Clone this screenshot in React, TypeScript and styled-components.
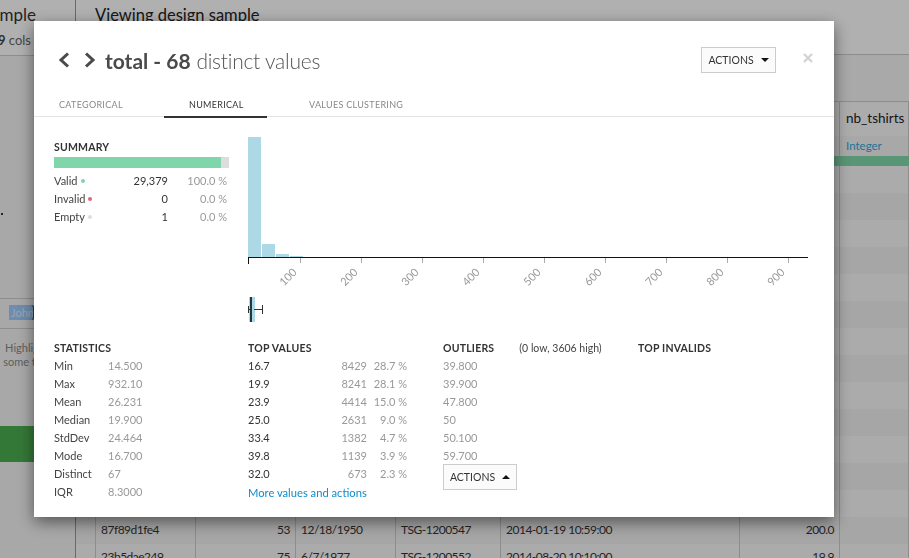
import styled, {createGlobalStyle} from 'styled-components';

const GlobalStyle = createGlobalStyle`
  html, body {
    margin: 0;
    padding: 0;
    height: 100%;
    overflow: hidden;
    background: #fff;
    font-family: Lato, "Noto Sans", sans-serif;
    color: #333;
  }
  * { box-sizing: border-box; }
`;

type RowData = string[];

const hiddenRows: RowData[] = Array.from({length: 13}, () => ['', '', '', '', '', '', '', '']);
const tableRows: RowData[] = [
  ...hiddenRows,
  ['', '87f89d1fe4', '53', '12/18/1950', 'TSG-1200547', '2014-01-19 10:59:00', '200.0', ''],
  ['', '23b5dae249', '75', '6/7/1977', 'TSG-1200552', '2014-08-20 10:10:00', '19.9', ''],
];
const rightAligned = [2, 6];

const summary = [
  {label: 'Valid', color: '#80d6aa', value: '29,379', pct: '100.0 %'},
  {label: 'Invalid', color: '#e0667c', value: '0', pct: '0.0 %'},
  {label: 'Empty', color: '#dddddd', value: '1', pct: '0.0 %'},
];

const statistics = [
  ['Min', '14.500'],
  ['Max', '932.10'],
  ['Mean', '26.231'],
  ['Median', '19.900'],
  ['StdDev', '24.464'],
  ['Mode', '16.700'],
  ['Distinct', '67'],
  ['IQR', '8.3000'],
];

const topValues = [
  ['16.7', '8429', '28.7 %'],
  ['19.9', '8241', '28.1 %'],
  ['23.9', '4414', '15.0 %'],
  ['25.0', '2631', '9.0 %'],
  ['33.4', '1382', '4.7 %'],
  ['39.8', '1139', '3.9 %'],
  ['32.0', '673', '2.3 %'],
];

const outliers = ['39.800', '39.900', '47.800', '50', '50.100', '59.700'];

const bars = [
  {x: 0, w: 13, y: 7, h: 120},
  {x: 14, w: 13, y: 114, h: 13},
  {x: 28, w: 13, y: 124, h: 3},
  {x: 42, w: 13, y: 126, h: 1},
];

const ticks = [100, 200, 300, 400, 500, 600, 700, 800, 900];

const Histogram = () => (
  <svg width="562" height="160" viewBox="0 0 562 160" style={{display: 'block'}}>
    {bars.map(b => (
      <rect key={b.x} x={b.x} y={b.y} width={b.w} height={b.h} fill="#add8e6" />
    ))}
    <path d="M0 127.5H560M.5 127V134" stroke="#111" strokeWidth="1" fill="none" />
    {ticks.map((t, i) => {
      const x = 52.5 + i * 61;
      return (
        <g key={t}>
          <line x1={x} x2={x} y1="128" y2="133" stroke="#aaa" />
          <text
            x={x - 5}
            y="141"
            transform={`rotate(-45 ${x - 5} 141)`}
            textAnchor="end"
            dominantBaseline="middle"
            fontSize="11"
            fill="#999"
            fontFamily="Lato, sans-serif"
          >
            {t}
          </text>
        </g>
      );
    })}
  </svg>
);

const BoxPlot = () => (
  <svg width="20" height="26" viewBox="0 0 20 26" style={{display: 'block'}}>
    <rect x="1" y="0" width="6" height="25" fill="#add8e6" />
    <rect x="2" y="0" width="2" height="25" fill="#1d3a44" />
    <path d="M.5 9V16M0 12.5H2M6 12.5H14M14.5 8V17" stroke="#333" strokeWidth="1" fill="none" />
  </svg>
);

export default function App() {
  return (
    <>
      <GlobalStyle />
      <Page>
        <Side>
          <SideTop>
            <SideTitle>Sample</SideTitle>
            <SideMeta><b>9</b> cols</SideMeta>
          </SideTop>
          <Dot />
          <Filter>
            <Chip>John</Chip>
          </Filter>
          <Hint>Highlight<br />some text</Hint>
          <GreenButton />
        </Side>
        <Main>
          <MainTop>Viewing design sample</MainTop>
          <Band />
          <TableHead>
            {columnWidths.map((w, i) => <HeadCell key={i} $w={w} />)}
            <HeadCell>nb_tshirts</HeadCell>
          </TableHead>
          <TypeRow>
            {columnWidths.map((w, i) => <TypeCell key={i} $w={w} />)}
            <TypeCell>Integer</TypeCell>
          </TypeRow>
          <QualityBar />
          {tableRows.map((row, r) => (
            <Row key={r} $odd={r % 2 === 1}>
              {row.map((cell, c) => (
                <Cell key={c} $col={c} $right={rightAligned.includes(c)}>{cell}</Cell>
              ))}
            </Row>
          ))}
        </Main>
      </Page>

      <Backdrop>
        <Modal>
          <TitleRow>
            <Nav>
              <svg width="12" height="16" viewBox="0 0 12 16"><path d="M10 1.5 3 8l7 6.5" fill="none" stroke="#4a4a4a" strokeWidth="3" /></svg>
              <svg width="12" height="16" viewBox="0 0 12 16"><path d="M2 1.5 9 8l-7 6.5" fill="none" stroke="#4a4a4a" strokeWidth="3" /></svg>
            </Nav>
            <Title><strong>total - 68</strong> <span>distinct values</span></Title>
            <TopActions>ACTIONS <Caret /></TopActions>
            <Close>
              <svg width="10" height="10" viewBox="0 0 10 10"><path d="M1 1l8 8M9 1l-8 8" stroke="#d4d4d4" strokeWidth="2.4" /></svg>
            </Close>
          </TitleRow>
          <Tabs>
            <Tab $w={130} $pad={25}>CATEGORICAL</Tab>
            <Tab $w={103} $pad={25} $active>NUMERICAL</Tab>
            <Tab $w={180} $pad={42}>VALUES CLUSTERING</Tab>
          </Tabs>
          <TopGrid>
            <div>
              <Heading>SUMMARY</Heading>
              <SummaryBar><SummaryFill style={{width: `${(167 / 175) * 100}%`}} /></SummaryBar>
              <SummaryRows>
                {summary.map(s => (
                  <SummaryRow key={s.label}>
                    <SummaryLabel>{s.label}<Bullet $color={s.color} /></SummaryLabel>
                    <SummaryValue>{s.value}</SummaryValue>
                    <SummaryPct>{s.pct}</SummaryPct>
                  </SummaryRow>
                ))}
              </SummaryRows>
            </div>
            <ChartColumn>
              <Histogram />
              <BoxPlace><BoxPlot /></BoxPlace>
            </ChartColumn>
          </TopGrid>
          <BottomGrid>
            <div>
              <Heading>STATISTICS</Heading>
              <List>
                {statistics.map(([k, v]) => (
                  <StatRow key={k}>
                    <StatKey>{k}</StatKey>
                    <Muted>{v}</Muted>
                  </StatRow>
                ))}
              </List>
            </div>
            <div>
              <Heading>TOP VALUES</Heading>
              <List>
                {topValues.map(([v, n, p]) => (
                  <TopRow key={v}>
                    <TopValue>{v}</TopValue>
                    <TopCount>{n}</TopCount>
                    <TopPct>{p}</TopPct>
                  </TopRow>
                ))}
              </List>
              <MoreLink>More values and actions</MoreLink>
            </div>
            <div>
              <HeadingRow>
                <Heading>OUTLIERS</Heading>
                <HeadingNote>(0 low, 3606 high)</HeadingNote>
              </HeadingRow>
              <List>
                {outliers.map(v => <OutlierRow key={v}>{v}</OutlierRow>)}
              </List>
              <BottomActions>ACTIONS <Caret $up /></BottomActions>
            </div>
            <div>
              <Heading>TOP INVALIDS</Heading>
            </div>
          </BottomGrid>
        </Modal>
      </Backdrop>
    </>
  );
}

const columnWidths = [20, 100, 100, 100, 105, 239, 100];

const Page = styled.div`
  display: flex;
  width: 909px;
  height: 558px;
  overflow: hidden;
  background: #fff;
`;

const Side = styled.aside`
  width: 76px;
  flex-shrink: 0;
  border-right: 1px solid #999;
  background: #f4f4f4;
  overflow: hidden;
`;
const SideTop = styled.div`
  height: 56px;
  background: #fff;
  border-bottom: 1px solid #ccc;
  padding-right: 39px;
  display: flex;
  flex-direction: column;
  align-items: flex-end;
`;
const SideTitle = styled.div`
  font-size: 17px;
  line-height: 22px;
  margin-top: 4px;
  white-space: nowrap;
  color: #333;
`;
const SideMeta = styled.div`
  font-size: 13px;
  line-height: 16px;
  margin-top: 6px;
  color: #666;
  white-space: nowrap;
  margin-right: 5px;
  b { color: #444; }
`;
const Dot = styled.div`
  width: 2px;
  height: 2px;
  margin: 157px 0 0 1px;
  background: #333;
`;
const Filter = styled.div`
  height: 31px;
  margin-top: 83px;
  border-top: 1px solid #ccc;
  border-bottom: 1px solid #ccc;
  padding: 6px 0 0 9px;
`;
const Chip = styled.div`
  position: relative;
  width: 30px;
  height: 15px;
  background: #a0ccff;
  color: #e0ecff;
  font-size: 11px;
  line-height: 15px;
  padding-left: 2px;
  &::after {
    content: '';
    position: absolute;
    left: 19px;
    top: 0;
    width: 5px;
    height: 15px;
    border-right: 2px solid #555;
    border-radius: 0 4px 4px 0;
  }
`;
const Hint = styled.div`
  width: 54px;
  margin-top: 12px;
  font-size: 11px;
  line-height: 14px;
  text-align: center;
  color: #888;
  white-space: nowrap;
`;
const GreenButton = styled.div`
  height: 36px;
  margin-top: 57px;
  background: #4caf50;
`;

const Main = styled.main`
  flex: 1;
  display: flex;
  flex-direction: column;
  overflow: hidden;
`;
const MainTop = styled.div`
  height: 55px;
  flex-shrink: 0;
  padding: 4px 0 0 19px;
  font-size: 16.5px;
  line-height: 22px;
  color: #222;
  background: #fff;
  border-bottom: 1px solid #ccc;
`;
const Band = styled.div`
  height: 47px;
  flex-shrink: 0;
  background: #f5f5f5;
  border-bottom: 1px solid #ccc;
`;
const TableHead = styled.div`
  display: flex;
  height: 34px;
  flex-shrink: 0;
  background: #fafafa;
`;
const HeadCell = styled.div<{$w?: number}>`
  width: ${p => (p.$w ? `${p.$w}px` : 'auto')};
  flex: ${p => (p.$w ? 'none' : 1)};
  padding-left: 6px;
  border-right: 1px solid #ccc;
  font-size: 13.5px;
  font-weight: 400;
  line-height: 33px;
  color: #222;
`;
const TypeRow = styled.div`
  display: flex;
  height: 20px;
  flex-shrink: 0;
  background: #f4f4f4;
`;
const TypeCell = styled.div<{$w?: number}>`
  width: ${p => (p.$w ? `${p.$w}px` : 'auto')};
  flex: ${p => (p.$w ? 'none' : 1)};
  padding-left: 6px;
  border-right: 1px solid #ccc;
  font-size: 11.5px;
  line-height: 20px;
  color: #2fa9dd;
`;
const QualityBar = styled.div`
  height: 10px;
  flex-shrink: 0;
  background: #82d9ab;
`;
const Row = styled.div<{$odd: boolean}>`
  display: flex;
  height: 27px;
  flex-shrink: 0;
  background: ${p => (p.$odd ? '#f1f1f1' : '#f8f8f8')};
`;
const Cell = styled.div<{$col: number; $right: boolean}>`
  width: ${p => (columnWidths[p.$col] ? `${columnWidths[p.$col]}px` : 'auto')};
  flex: ${p => (columnWidths[p.$col] ? 'none' : 1)};
  padding: 0 5px;
  border-right: 1px solid #ccc;
  font-size: 12px;
  letter-spacing: -0.5px;
  line-height: 25px;
  text-align: ${p => (p.$right ? 'right' : 'left')};
  color: #333;
  white-space: nowrap;
  overflow: hidden;
`;

const Backdrop = styled.div`
  position: fixed;
  inset: 0;
  background: rgba(0, 0, 0, 0.31);
`;
const Modal = styled.div`
  position: absolute;
  left: 34px;
  top: 21px;
  width: 800px;
  height: 496px;
  background: #fff;
  box-shadow: 0 5px 15px rgba(0, 0, 0, 0.5);
`;
const TitleRow = styled.div`
  display: flex;
  align-items: center;
  padding: 26px 0 0 24px;
  box-sizing: content-box;
  height: 26px;
`;
const Nav = styled.div`
  display: flex;
  gap: 14px;
  margin-right: 9px;
`;
const Title = styled.div`
  font-size: 21px;
  font-weight: 300;
  color: #555;
  white-space: nowrap;
  strong { font-weight: 700; color: #4a4a4a; }
  span { letter-spacing: -0.25px; }
`;
const ActionButton = styled.div`
  display: flex;
  align-items: center;
  justify-content: center;
  gap: 7px;
  width: 75px;
  height: 26px;
  background: #fbfbfb;
  border: 1px solid #ccc;
  font-size: 10.5px;
  color: #333;
`;
const TopActions = styled(ActionButton)`
  margin-left: auto;
`;
const BottomActions = styled(ActionButton)`
  width: 74px;
  margin-top: -1px;
`;
const Caret = styled.span<{$up?: boolean}>`
  width: 0;
  height: 0;
  border-left: 4px solid transparent;
  border-right: 4px solid transparent;
  border-top: ${p => (p.$up ? '0' : '4px solid #111')};
  border-bottom: ${p => (p.$up ? '4px solid #111' : '0')};
`;
const Close = styled.div`
  display: flex;
  margin: -4px 21px 0 27px;
`;
const Tabs = styled.div`
  display: flex;
  margin-top: 25px;
  height: 19px;
  border-bottom: 1px solid #e4e4e4;
`;
const Tab = styled.div<{$w: number; $pad: number; $active?: boolean}>`
  width: ${p => p.$w}px;
  height: 20px;
  padding-left: ${p => p.$pad}px;
  font-size: 9px;
  line-height: 14px;
  letter-spacing: 0.3px;
  white-space: nowrap;
  color: ${p => (p.$active ? '#333' : '#888')};
  border-bottom: ${p => (p.$active ? '2px solid #333' : '0')};
`;
const TopGrid = styled.div`
  display: grid;
  grid-template-columns: 175px 1fr;
  column-gap: 19px;
  padding: 23px 0 0 20px;
  height: 224px;
`;
const ChartColumn = styled.div`
  margin-top: -10px;
`;
const BoxPlace = styled.div`
  margin-top: 7px;
`;
const Heading = styled.div`
  font-size: 10.5px;
  font-weight: 700;
  line-height: 14px;
  letter-spacing: 0.2px;
  color: #333;
  white-space: nowrap;
`;
const SummaryBar = styled.div`
  height: 11px;
  margin-top: 3px;
  background: #dddddd;
`;
const SummaryFill = styled.div`
  height: 100%;
  background: #80d6aa;
`;
const SummaryRows = styled.div`
  margin-top: 4px;
`;
const SummaryRow = styled.div`
  display: grid;
  grid-template-columns: 60px 54px 59px;
  height: 18px;
  font-size: 11px;
  line-height: 18px;
`;
const SummaryLabel = styled.div`
  display: flex;
  align-items: center;
  gap: 3px;
  color: #444;
`;
const Bullet = styled.span<{$color: string}>`
  width: 4px;
  height: 4px;
  border-radius: 50%;
  background: ${p => p.$color};
`;
const SummaryValue = styled.div`
  text-align: right;
  color: #333;
`;
const SummaryPct = styled.div`
  text-align: right;
  color: #999;
`;
const BottomGrid = styled.div`
  display: grid;
  grid-template-columns: 194px 195px 195px 1fr;
  padding-left: 20px;
`;
const HeadingRow = styled.div`
  display: flex;
  gap: 25px;
`;
const HeadingNote = styled.div`
  font-size: 10.5px;
  line-height: 14px;
  color: #444;
  white-space: nowrap;
`;
const List = styled.div`
  margin-top: 2px;
  font-size: 11px;
  line-height: 18px;
`;
const StatRow = styled.div`
  display: grid;
  grid-template-columns: 54px 1fr;
`;
const StatKey = styled.div`
  color: #444;
`;
const Muted = styled.div`
  color: #999;
`;
const TopRow = styled.div`
  display: grid;
  grid-template-columns: 80px 39px 40px;
`;
const TopValue = styled.div`
  color: #333;
`;
const TopCount = styled.div`
  text-align: right;
  color: #999;
`;
const TopPct = styled.div`
  text-align: right;
  color: #999;
`;
const MoreLink = styled.div`
  margin-top: 2px;
  font-size: 11.2px;
  line-height: 16px;
  color: #0f8ccc;
  white-space: nowrap;
`;
const OutlierRow = styled.div`
  color: #999;
`;
